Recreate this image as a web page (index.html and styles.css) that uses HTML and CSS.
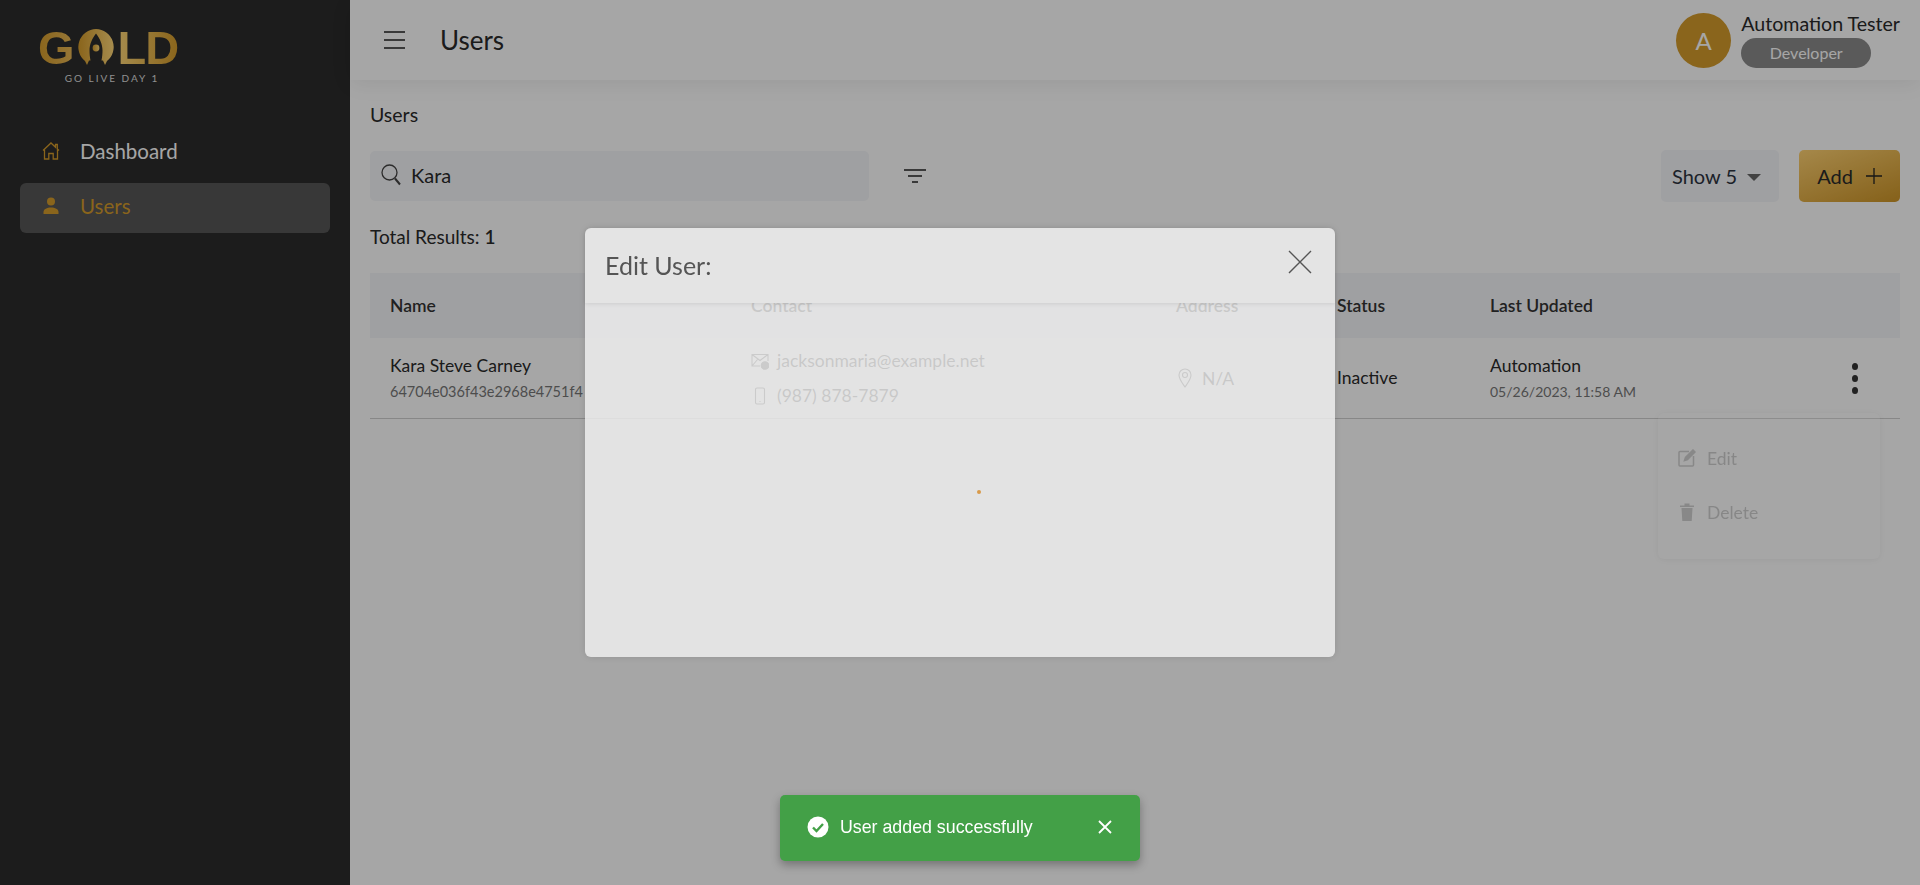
FILE: index.html
```html
<!DOCTYPE html>
<html lang="en">
<head>
    <meta charset="UTF-8">
    <title>Users</title>
    <link rel="stylesheet" href="styles.css">
</head>
<body>

<div class="sidebar">
    <div class="logo">
        <div class="logo-word">
            <span class="logo-letters">G</span>
            <svg class="logo-rocket" viewBox="0 0 36 36" width="36" height="36">
                <defs>
                    <linearGradient id="goldfill" x1="0" y1="0" x2="1" y2="0">
                        <stop offset="0" stop-color="#d49b2b"/>
                        <stop offset="1" stop-color="#ffd777"/>
                    </linearGradient>
                </defs>
                <path d="M18 0a18 18 0 0 1 11 32l-2 4-2-4.500h-1.500c.7-4 1-7 1-10 0-6-2.500-12-6.500-17-4 5-6.500 11-6.500 17 0 3 .3 6 1 10H11l-2 4.500-2-4A18 18 0 0 1 18 0z" fill="url(#goldfill)"/>
                <circle cx="18" cy="19" r="3.400" fill="url(#goldfill)"/>
            </svg>
            <span class="logo-letters logo-letters-end">LD</span>
        </div>
        <div class="logo-tag">GO LIVE DAY 1</div>
    </div>
    <div class="nav-item">
        <svg class="nav-icon" viewBox="0 0 18 18" width="18" height="18" fill="none" stroke="#d49b2b" stroke-width="1.300">
            <path d="M1 8.500 9 1l4.500 4.200V2.500h1.800v4.400L17 8.500"/>
            <path d="M2.500 7.500V17h4.300v-5.500h4.400V17h4.300V7.500"/>
        </svg>
        <span>Dashboard</span>
    </div>
    <div class="nav-item active">
        <svg class="nav-icon" viewBox="0 0 18 18" width="18" height="18" fill="#d49b2b">
            <circle cx="9" cy="4.500" r="4"/>
            <path d="M1.500 17v-2c0-3 3.500-4.500 7.500-4.500s7.500 1.500 7.500 4.500v2z"/>
        </svg>
        <span>Users</span>
    </div>
</div>

<div class="main">
    <div class="topbar">
        <svg class="menu-icon" viewBox="0 0 21 18" width="21" height="18" stroke="#222" stroke-width="1.600">
            <path d="M0 1h21M0 9h21M0 17h21"/>
        </svg>
        <div class="topbar-title">Users</div>
        <div class="account">
            <div class="avatar">A</div>
            <div>
                <div class="account-name">Automation Tester</div>
                <div class="role-badge">Developer</div>
            </div>
        </div>
    </div>

    <div class="content">
        <div class="breadcrumb">Users</div>

        <div class="toolbar">
            <div class="search-box">
                <svg viewBox="0 0 20 22" width="20" height="22" fill="none" stroke="#444" stroke-width="1.300">
                    <circle cx="8.500" cy="8.500" r="7.500"/>
                    <path d="m14 14.500 5 6" stroke-width="2"/>
                </svg>
                <span>Kara</span>
            </div>
            <svg class="filter-icon" viewBox="0 0 22 14" width="22" height="14" stroke="#222" stroke-width="1.700">
                <path d="M0 1h22M4 7h14M8 13h6"/>
            </svg>
            <div class="show-select">Show 5 <span class="caret"></span></div>
            <div class="add-button">Add
                <svg viewBox="0 0 16 16" width="16" height="16" stroke="#222" stroke-width="1.300"><path d="M8 0v16M0 8h16"/></svg>
            </div>
        </div>

        <div class="total">Total Results: <b>1</b></div>

        <div class="table-row table-head">
            <div>Name</div>
            <div>Contact</div>
            <div>Address</div>
            <div>Status</div>
            <div>Last Updated</div>
        </div>
        <div class="table-row table-body">
            <div>
                <div class="cell-main">Kara Steve Carney</div>
                <div class="cell-sub cell-id">64704e036f43e2968e4751f4</div>
            </div>
            <div class="contact-list">
                <div class="icon-text">
                    <svg viewBox="0 0 18 18" width="18" height="18" fill="none" stroke="#444" stroke-width="1.100">
                        <path d="M9 14H1V2.500h16V9M1 2.500l8 6 8-6M1 14l5.500-6.500"/>
                        <circle cx="14" cy="13.500" r="3.800" fill="#444"/>
                    </svg>
                    jacksonmaria@example.net
                </div>
                <div class="icon-text">
                    <svg viewBox="0 0 18 18" width="18" height="18" fill="none" stroke="#444" stroke-width="1.100">
                        <rect x="4.500" y="1" width="9" height="16" rx="1.500"/>
                        <path d="M8.500 14.500h1"/>
                    </svg>
                    (987) 878-7879
                </div>
            </div>
            <div class="icon-text">
                <svg viewBox="0 0 18 20" width="18" height="20" fill="none" stroke="#444" stroke-width="1.100">
                    <path d="M9 19C5.500 14 3 11 3 7a6 6 0 0 1 12 0c0 4-2.500 7-6 12z"/>
                    <circle cx="9" cy="7" r="2.500"/>
                </svg>
                N/A
            </div>
            <div class="cell-main">Inactive</div>
            <div>
                <div class="cell-main">Automation</div>
                <div class="cell-sub">05/26/2023, 11:58 AM</div>
            </div>
            <div class="row-actions">
                <span></span><span></span><span></span>
                <div class="action-menu">
                    <div class="action-item">
                        <svg viewBox="0 0 18 18" width="18" height="18" fill="none" stroke="#333" stroke-width="1.500">
                            <path d="M11 2.500H2a1 1 0 0 0-1 1V16a1 1 0 0 0 1 1h12.500a1 1 0 0 0 1-1V7"/>
                            <path d="m6.500 11.500 1-3L15 1l2 2-7.500 7.500z" fill="#333"/>
                        </svg>
                        Edit
                    </div>
                    <div class="action-item">
                        <svg viewBox="0 0 18 20" width="18" height="20" fill="#333">
                            <path d="M2 3.500h14V5H2zM6.500 1.500h5v2h-5zM3.500 6h11l-.8 13H4.300z"/>
                        </svg>
                        Delete
                    </div>
                </div>
            </div>
        </div>
    </div>
</div>

<div class="overlay">
    <div class="modal">
        <div class="modal-header">
            <span class="modal-title">Edit User:</span>
            <svg class="modal-close" viewBox="0 0 24 24" width="24" height="24" stroke="#555" stroke-width="1.400"><path d="m1 1 22 22M23 1 1 23"/></svg>
        </div>
        <div class="modal-body">
            <div class="spinner"></div>
        </div>
    </div>
</div>

<div class="toast">
    <svg viewBox="0 0 22 22" width="22" height="22">
        <circle cx="11" cy="11" r="10.500" fill="#fff"/>
        <path d="m6 11.500 3.500 3.500L16 8" fill="none" stroke="#43a047" stroke-width="2.400"/>
    </svg>
    <span class="toast-text">User added successfully</span>
    <svg class="toast-close" viewBox="0 0 14 14" width="14" height="14" stroke="#fff" stroke-width="1.800"><path d="m1 1 12 12M13 1 1 13"/></svg>
</div>

</body>
</html>
```

FILE: styles.css
```css
body {
    font-family: Lato, "Open Sans", Arial, sans-serif;
    margin: 0;
    background-color: #ffffff;
    color: #2a2a2a;
    display: flex;
    height: 885px;
    overflow: hidden;
}

/* Sidebar */
.sidebar {
    width: 350px;
    flex-shrink: 0;
    background-color: #2b2b2b;
    padding: 30px 20px 0;
    box-sizing: border-box;
}
.logo {
    width: 138px;
    margin-left: 18px;
    height: 98px;
}
.logo-word {
    display: flex;
    align-items: flex-start;
    height: 36px;
}
.logo-letters {
    font-family: "Liberation Sans", Arial, sans-serif;
    font-weight: 700;
    font-size: 47px;
    line-height: 36px;
    background: linear-gradient(90deg, #d49b2b, #e9b958);
    -webkit-background-clip: text;
    background-clip: text;
    color: transparent;
}
.logo-letters-end {
    background: linear-gradient(90deg, #ffd777, #d49b2b);
    -webkit-background-clip: text;
    background-clip: text;
    letter-spacing: -1px;
}
.logo-rocket {
    margin: -1px 4px 0 3px;
    flex-shrink: 0;
}
.logo-tag {
    font-size: 10px;
    letter-spacing: 2px;
    color: #dddddd;
    text-align: center;
    margin-top: 6px;
    margin-left: 10px;
    white-space: nowrap;
}
.nav-item {
    display: flex;
    align-items: center;
    height: 50px;
    box-sizing: border-box;
    padding: 0 0 4px 22px;
    margin-bottom: 5px;
    border-radius: 6px;
    font-size: 20.500px;
    color: #ffffff;
}
.nav-icon {
    margin-right: 20px;
    margin-top: -1px;
}
.nav-item.active {
    background-color: #565656;
    color: #d49b2b;
}

/* Header */
.main {
    flex: 1;
    min-width: 0;
}
.topbar {
    height: 80px;
    display: flex;
    align-items: center;
    padding: 0 20px 0 34px;
    box-shadow: 0 4px 20px rgba(0, 0, 0, 0.07);
}
.menu-icon {
    margin-right: 35px;
}
.topbar-title {
    font-size: 26px;
    flex: 1;
}
.account {
    display: flex;
    align-items: center;
    gap: 10px;
}
.avatar {
    width: 55px;
    height: 55px;
    border-radius: 50%;
    background-color: #d49b2b;
    color: #ffffff;
    font-size: 24px;
    display: flex;
    align-items: center;
    justify-content: center;
}
.account-name {
    font-size: 19.600px;
    line-height: 24px;
    margin-top: 0;
}
.role-badge {
    width: 130px;
    height: 30px;
    margin-top: 2px;
    border-radius: 15px;
    background-color: #8b8b8b;
    color: #ffffff;
    font-size: 16px;
    line-height: 30px;
    text-align: center;
}

/* Content */
.content {
    padding: 0 20px;
}
.breadcrumb {
    font-size: 19.500px;
    line-height: 24px;
    margin-top: 23px;
}
.toolbar {
    display: flex;
    align-items: center;
    margin-top: 23px;
    height: 52px;
}
.search-box {
    width: 499px;
    height: 50px;
    box-sizing: border-box;
    padding: 0 0 2px 11px;
    display: flex;
    align-items: center;
    gap: 10px;
    background-color: #f5f6f9;
    border-radius: 5px;
    font-size: 20px;
}
.filter-icon {
    margin-left: 35px;
    margin-right: auto;
}
.show-select {
    width: 118px;
    height: 52px;
    box-sizing: border-box;
    padding-left: 11px;
    display: flex;
    align-items: center;
    background-color: #f5f6f9;
    border-radius: 5px;
    font-size: 20px;
    color: #2c3340;
}
.caret {
    margin-left: 10px;
    margin-top: 2px;
    border-top: 7px solid #666;
    border-left: 7px solid transparent;
    border-right: 7px solid transparent;
}
.add-button {
    width: 101px;
    height: 52px;
    margin-left: 20px;
    display: flex;
    align-items: center;
    justify-content: center;
    gap: 13px;
    border-radius: 5px;
    font-size: 20px;
    background: linear-gradient(160deg, #fed172, #cd9528);
}
.total {
    font-size: 19px;
    line-height: 24px;
    margin-top: 23px;
    margin-bottom: 24px;
}
.total b {
    font-weight: 600;
}

/* Table */
.table-row {
    display: grid;
    grid-template-columns: 361px 425px 161px 153px 1fr 50px;
    align-items: center;
    padding-left: 20px;
}
.table-head {
    height: 65px;
    background-color: #f5f6f9;
    font-size: 17.500px;
    font-weight: 600;
    color: #333;
}
.table-body {
    height: 81px;
    box-sizing: border-box;
    border-bottom: 1px solid #cfcfcf;
    font-size: 17.500px;
}
.cell-main {
    font-size: 17.500px;
    line-height: 22px;
}
.cell-sub {
    font-size: 14px;
    color: #777;
    line-height: 20px;
    margin-top: 5px;
}
.cell-id {
    font-size: 14.500px;
}
.contact-list {
    display: flex;
    flex-direction: column;
    gap: 14px;
}
.icon-text {
    display: flex;
    align-items: center;
    gap: 8px;
    color: #333;
    font-size: 17.500px;
    line-height: 21px;
}
.row-actions {
    position: relative;
    width: 50px;
    height: 50px;
    margin-left: -20px;
    display: flex;
    flex-direction: column;
    align-items: center;
    justify-content: center;
    gap: 5px;
}
.row-actions > span {
    width: 6px;
    height: 7px;
    border-radius: 50%;
    background-color: #333;
}
.action-menu {
    position: absolute;
    top: 60px;
    right: 0;
    width: 222px;
    height: 146px;
    box-sizing: border-box;
    padding-top: 18px;
    background-color: #ffffff;
    border-radius: 6px;
    box-shadow: 0 1px 6px rgba(0, 0, 0, 0.25);
    opacity: 0.22;
}
.action-item {
    display: flex;
    align-items: center;
    gap: 11px;
    height: 54px;
    padding-left: 20px;
    font-size: 17.500px;
}

/* Modal */
.overlay {
    position: fixed;
    inset: 0;
    background-color: rgba(0, 0, 0, 0.35);
    display: flex;
    align-items: center;
    justify-content: center;
}
.modal {
    width: 750px;
    height: 429px;
    display: flex;
    flex-direction: column;
    border-radius: 6px;
    box-shadow: 0 0 8px rgba(0, 0, 0, 0.12);
}
.modal-header {
    height: 75px;
    flex-shrink: 0;
    box-sizing: border-box;
    padding: 0 23px 0 20px;
    display: flex;
    align-items: center;
    justify-content: space-between;
    background-color: #e4e4e4;
    border-radius: 6px 6px 0 0;
    box-shadow: 0 1px 4px rgba(0, 0, 0, 0.1);
    font-size: 25px;
    color: #555;
    position: relative;
}
.modal-title {
    margin-top: -2px;
}
.modal-close {
    margin-top: -7px;
}
.modal-body {
    flex: 1;
    background-color: rgba(242, 242, 242, 0.8);
    border-radius: 0 0 6px 6px;
    display: flex;
    align-items: center;
    justify-content: center;
    padding: 24px 0 0 38px;
}
.spinner {
    width: 4px;
    height: 4px;
    border-radius: 50%;
    background-color: #d99a4a;
}

/* Toast */
.toast {
    position: fixed;
    left: 780px;
    bottom: 24px;
    width: 360px;
    height: 66px;
    box-sizing: border-box;
    padding: 0 28px 2px 27px;
    display: flex;
    align-items: center;
    background-color: #43a047;
    border-radius: 5px;
    box-shadow: 0 4px 10px rgba(0, 0, 0, 0.3);
    color: #ffffff;
    font-family: "Liberation Sans", Arial, sans-serif;
    font-size: 17.800px;
}
.toast-text {
    margin-left: 11px;
    flex: 1;
}
```
